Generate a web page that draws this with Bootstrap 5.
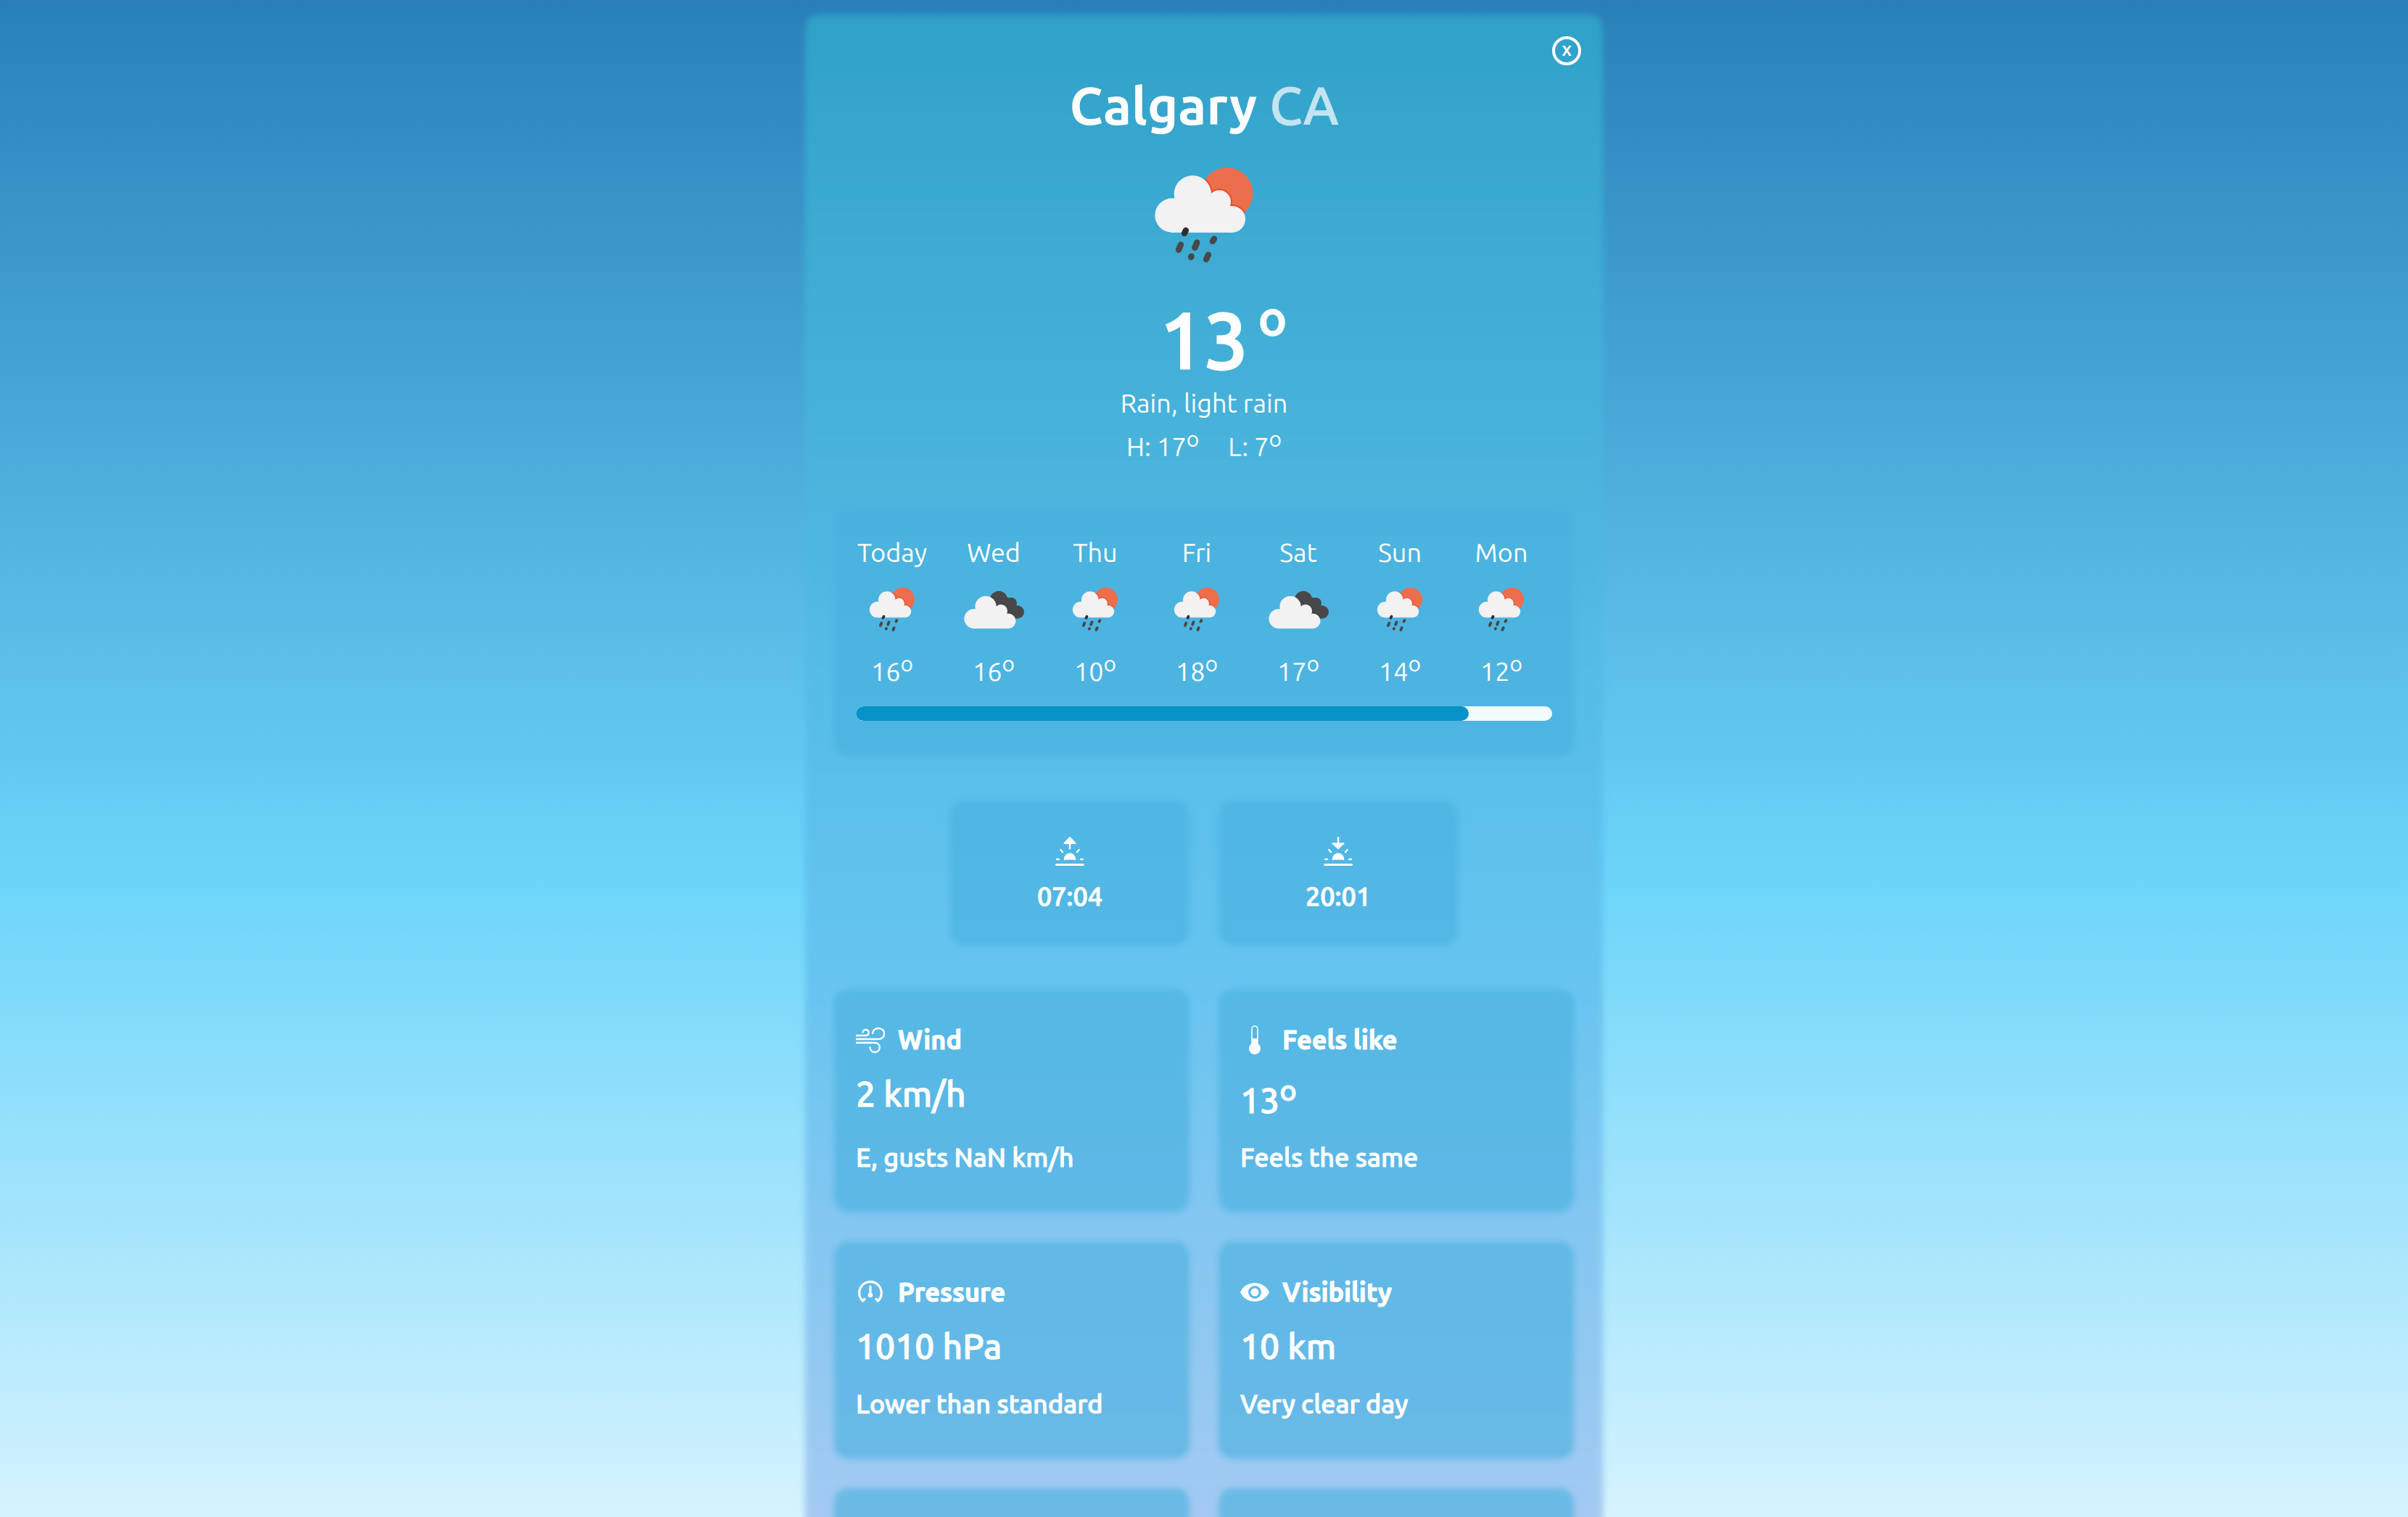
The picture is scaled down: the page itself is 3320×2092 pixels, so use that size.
<!DOCTYPE html>
<html lang="en">
<head>
<meta charset="utf-8">
<meta name="viewport" content="width=device-width, initial-scale=1">
<title>Calgary weather</title>
<link href="https://cdn.jsdelivr.net/npm/bootstrap@5.3.0/dist/css/bootstrap.min.css" rel="stylesheet">
<style>
body { height: 100vh; overflow: hidden; font-family: Ubuntu, "Noto Sans", sans-serif; font-size: 36px; line-height: 42px; color: #fff; background: #2980b9; }
.sky { min-height: 2440px; padding: 20px; background: linear-gradient(#2980b9, #6dd5fa 50%, #fff); }
.panel { max-width: 1100px; padding: 30px 40px 70px; position: relative; z-index: 0; }
.soft { position: relative; z-index: 0; }
.panel::before, .soft::before { content: ""; position: absolute; inset: 0; z-index: -1; border-radius: 20px; filter: blur(4px); }
.panel::before { background: linear-gradient(#2fa1c8, #38a7cf 7.5%, #4bb5de 27.5%, #5ac0eb 44%, #66c5f0 55%, #84c7f1 70%, #9fcaf2 84%, #beccf3); }
.soft::before { background: rgba(73, 176, 223, .62); }
.panel-top { margin-right: -10px; }
.close-btn { width: 40px; height: 40px; border: 4px solid #fff; border-radius: 50%; background: none; color: #fff; font-size: 20px; line-height: 20px; font-weight: 700; padding: 0; }
.city { font-size: 72px; line-height: 84px; margin: 14px 0 12px; font-weight: 700; }
.country { font-weight: 500; opacity: .7; -webkit-text-stroke: 1px; }
.now { display: grid; grid-template-columns: 1fr auto 1fr; margin-top: 26px; font-size: 108px; line-height: 124px; font-weight: 500; -webkit-text-stroke: 3px; }
.now-deg { font-size: 66px; line-height: 62px; padding-left: 14px; -webkit-text-stroke: 2px; }
.deg { font-size: .833em; vertical-align: super; line-height: 0; }
.summary { margin: 5px 0 0; }
.range { gap: 40px; margin: 18px 0 60px; }
.forecast { padding: 44px 30px 50px; }
.days { gap: 40px; margin-bottom: 27px; }
.day { width: 100px; flex: none; }
.day-icon { width: 92px; height: 83px; margin: 13px 0 26px; }
.track { height: 20px; border-radius: 10px; background: #f2fcfb; }
.track .progress-bar { border-radius: 10px; background: #0793c9; }
.sun-row { gap: 40px; margin: 60px 0; }
.sun-card { width: 330px; padding: 50px 0 47px; gap: 21px; font-weight: 500; -webkit-text-stroke: 1px; }
.icon { width: 40px; height: 40px; flex: none; }
.facts { display: grid; grid-template-columns: 1fr 1fr; gap: 40px; }
.fact { padding: 49px 30px 55px; min-height: 300px; font-weight: 500; -webkit-text-stroke: 1px; }
.fact-head { gap: 18px; font-size: 36px; line-height: 42px; font-weight: 700; margin-bottom: 25px; }
.fact-value { font-size: 48px; line-height: 56px; margin-bottom: 30px; }
.fact-value .deg { line-height: 48px; }
</style>
</head>
<body>
<svg width="0" height="0" class="position-absolute" aria-hidden="true">
  <defs>
    <g id="cloud">
      <circle cx="168" cy="291" r="71"/><circle cx="253" cy="203" r="77"/><circle cx="363" cy="235" r="48"/><circle cx="416" cy="307" r="55"/>
      <path d="M168 362V240L253 203L363 225L416 290V362Z"/>
    </g>
    <clipPath id="sunclip"><circle cx="395" cy="200" r="107"/></clipPath>
    <symbol id="rain" viewBox="0 0 600 540">
      <circle cx="395" cy="200" r="107" fill="#ec6e4c"/>
      <g clip-path="url(#sunclip)"><use href="#cloud" fill="#eb4d27" stroke="#eb4d27" stroke-width="12"/></g>
      <use href="#cloud" fill="#f2f2f2"/>
      <g stroke="#484848" stroke-width="25" stroke-linecap="round">
        <path d="M225 353l-6 12" stroke="#303030"/><path d="M204 412l-9 22M271 403l-9 22M342 388l-6 10M248 460l-2 4M318 454l-9 19"/>
      </g>
    </symbol>
    <symbol id="clouds" viewBox="0 0 92 83">
      <g fill="#484849"><circle cx="53" cy="31" r="12"/><circle cx="70" cy="36" r="8"/><circle cx="79" cy="48" r="9"/><path d="M53 22l17 8 8 12v15H50z"/></g>
      <g transform="translate(-13 2) scale(.19)"><use href="#cloud" fill="#333" stroke="#333" stroke-width="6" clip-path="url(#darkclip)"/><use href="#cloud" fill="#f2f2f2"/></g>
    </symbol>
    <clipPath id="darkclip"><path d="M290 150h170v130H290z"/></clipPath>
  </defs>
</svg>
<div class="sky">
<main class="panel mx-auto">
  <div class="panel-top d-flex justify-content-end">
    <button type="button" class="close-btn d-flex align-items-center justify-content-center" aria-label="Close">X</button>
  </div>
  <header class="text-center">
    <h1 class="city">Calgary <span class="country">CA</span></h1>
    <svg class="d-block mx-auto" width="200" height="180" role="img" aria-label="Light rain"><use href="#rain"/></svg>
    <div class="now"><span></span><span>13</span><span class="now-deg text-start">o</span></div>
    <p class="summary">Rain, light rain</p>
    <div class="range d-flex justify-content-center"><span>H: 17<span class="deg">o</span></span><span>L: 7<span class="deg">o</span></span></div>
  </header>

  <section class="forecast soft" aria-label="Forecast">
    <div class="days d-flex text-center">
      <div class="day d-flex flex-column align-items-center"><span>Today</span><svg class="day-icon"><use href="#rain"/></svg><span>16<span class="deg">o</span></span></div>
      <div class="day d-flex flex-column align-items-center"><span>Wed</span><svg class="day-icon"><use href="#clouds"/></svg><span>16<span class="deg">o</span></span></div>
      <div class="day d-flex flex-column align-items-center"><span>Thu</span><svg class="day-icon"><use href="#rain"/></svg><span>10<span class="deg">o</span></span></div>
      <div class="day d-flex flex-column align-items-center"><span>Fri</span><svg class="day-icon"><use href="#rain"/></svg><span>18<span class="deg">o</span></span></div>
      <div class="day d-flex flex-column align-items-center"><span>Sat</span><svg class="day-icon"><use href="#clouds"/></svg><span>17<span class="deg">o</span></span></div>
      <div class="day d-flex flex-column align-items-center"><span>Sun</span><svg class="day-icon"><use href="#rain"/></svg><span>14<span class="deg">o</span></span></div>
      <div class="day d-flex flex-column align-items-center"><span>Mon</span><svg class="day-icon"><use href="#rain"/></svg><span>12<span class="deg">o</span></span></div>
    </div>
    <div class="progress track" role="progressbar" aria-label="Days shown" aria-valuenow="88" aria-valuemin="0" aria-valuemax="100"><div class="progress-bar" style="width:88%"></div></div>
  </section>

  <section class="sun-row d-flex justify-content-center">
    <div class="sun-card soft d-flex flex-column align-items-center">
      <svg class="icon" viewBox="0 0 40 40" fill="#fff" stroke="#fff" stroke-linecap="round" stroke-linejoin="round"><path d="M20 1l7.500 8h-15z" stroke-width="2"/><path d="M20 9v7M7.500 18l2.500 3M32.500 18l-2.500 3M2 31h3M35 31h3" fill="none" stroke-width="2.400"/><path d="M1.500 38.500h37" stroke-width="2.800"/><path d="M12.500 31.500c0-5 3.500-8.500 7.500-8.500s7.500 3.500 7.500 8.500c-1.500-1-13.500-1-15 0z" stroke-width="1.500"/></svg>
      <span>07:04</span>
    </div>
    <div class="sun-card soft d-flex flex-column align-items-center">
      <svg class="icon" viewBox="0 0 40 40" fill="#fff" stroke="#fff" stroke-linecap="round" stroke-linejoin="round"><path d="M20 16l7.500-7q-7.500 1-15 0z" stroke-width="2"/><path d="M20 1v8M7.500 18l2.500 3M32.500 18l-2.500 3M2 31h3M35 31h3" fill="none" stroke-width="2.400"/><path d="M1.500 38.500h37" stroke-width="2.800"/><path d="M12.500 31.500c0-5 3.500-8.500 7.500-8.500s7.500 3.500 7.500 8.500c-1.500-1-13.500-1-15 0z" stroke-width="1.500"/></svg>
      <span>20:01</span>
    </div>
  </section>

  <section class="facts">
    <article class="fact soft d-flex flex-column">
      <h2 class="fact-head d-flex align-items-center"><svg class="icon" viewBox="0 0 40 40" fill="none" stroke="#fff" stroke-width="2.400"><path d="M0 14h14c5 0 5-8-.500-8c-2.500 0-4 2-4 4.500M0 19h31c11 0 11-15 0-15c-5 0-8 3.500-8 8M0 24h26c9 0 9 13 0 13c-4 0-6.500-3-6.500-7.500"/></svg>Wind</h2>
      <div class="fact-value">2 km/h</div>
      <p class="mb-0 mt-auto">E, gusts NaN km/h</p>
    </article>
    <article class="fact soft d-flex flex-column">
      <h2 class="fact-head d-flex align-items-center"><svg class="icon" viewBox="0 0 40 40"><path d="M16 27V5a4 4 0 0 1 8 0v22" fill="none" stroke="#fff" stroke-width="1.600"/><path d="M16 17.500q4 1.500 8 0V27h-8z" fill="#fff"/><circle cx="20" cy="32" r="8" fill="#fff"/></svg>Feels like</h2>
      <div class="fact-value">13<span class="deg">o</span></div>
      <p class="mb-0 mt-auto">Feels the same</p>
    </article>
    <article class="fact soft d-flex flex-column">
      <h2 class="fact-head d-flex align-items-center"><svg class="icon" viewBox="0 0 40 40" fill="none" stroke="#fff" stroke-width="3.200" stroke-linecap="round" stroke-linejoin="round"><path d="M12 29.500L9.500 32a15.300 15.300 0 1 1 21 0L28 29.500"/><path d="M20 12v11"/><circle cx="20" cy="24" r="1.700" fill="#fff"/></svg>Pressure</h2>
      <div class="fact-value">1010 hPa</div>
      <p class="mb-0 mt-auto">Lower than standard</p>
    </article>
    <article class="fact soft d-flex flex-column">
      <h2 class="fact-head d-flex align-items-center"><svg class="icon" viewBox="0 0 40 40" fill="#fff"><path fill-rule="evenodd" d="M0 20C7 3 33 3 40 20C33 37 7 37 0 20zM20 11a9 9 0 1 0 0 18a9 9 0 1 0 0-18z"/><circle cx="20" cy="20" r="5.500"/></svg>Visibility</h2>
      <div class="fact-value">10 km</div>
      <p class="mb-0 mt-auto">Very clear day</p>
    </article>
    <article class="fact soft"></article>
    <article class="fact soft"></article>
  </section>
</main>
</div>
<script src="https://cdn.jsdelivr.net/npm/bootstrap@5.3.0/dist/js/bootstrap.bundle.min.js"></script>
</body>
</html>
